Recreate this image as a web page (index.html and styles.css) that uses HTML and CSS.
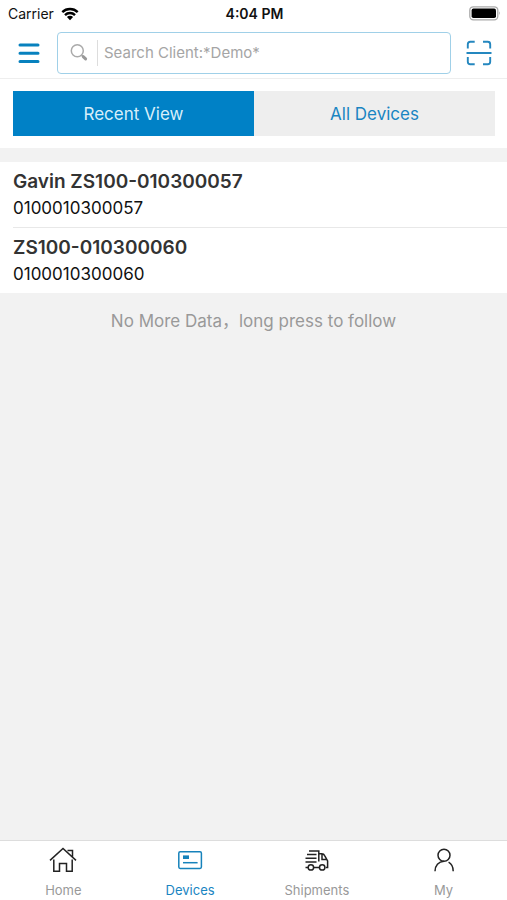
FILE: index.html
```html
<!DOCTYPE html>
<html lang="en">
<head>
<meta charset="utf-8">
<meta name="viewport" content="width=device-width, initial-scale=1">
<title>Devices</title>
<link rel="stylesheet" href="styles.css">
</head>
<body>
<div class="status">
  <div class="carrier">Carrier
    <svg width="18" height="14" viewBox="0 0 18 14" aria-hidden="true"><path d="M1.3 5.2a11 11 0 0 1 15.4 0M4 8.1a7.1 7.1 0 0 1 10 0" fill="none" stroke="#000" stroke-width="2.4"/><path d="M9 13.2 5.9 10.1a4.4 4.4 0 0 1 6.2 0z"/></svg>
  </div>
  <div class="time">4:04 PM</div>
  <svg class="battery" width="32" height="15" viewBox="0 0 32 15" aria-hidden="true"><rect x=".8" y=".8" width="28" height="13" rx="3.5" fill="#fff" stroke="#aaa" stroke-width="1.3"/><rect x="2.6" y="2.6" width="24.4" height="9.4" rx="1.8"/><path d="M30.2 5.3q1.6 2 0 4z" fill="#999"/></svg>
</div>
<header class="header">
  <button class="icon-button" type="button" aria-label="Menu">
    <svg width="22" height="22" viewBox="0 0 22 22"><path d="M2 2.9h18M2 11.3h18M2 19.6h18" fill="none" stroke="#0781be" stroke-width="3" stroke-linecap="round"/></svg>
  </button>
  <label class="search">
    <svg width="18" height="18" viewBox="0 0 18 18" aria-hidden="true"><circle cx="7.3" cy="6.8" r="6" fill="none" stroke="#aaa" stroke-width="1.5"/><path d="m11.6 11.3 1.8 1.5" stroke="#aaa" stroke-width="1.4"/><path d="m13.2 12.6 2.4 2.3" stroke="#999" stroke-width="3" stroke-linecap="round"/></svg>
    <input type="text" placeholder="Search Client:*Demo*" aria-label="Search Client">
  </label>
  <button class="icon-button" type="button" aria-label="Scan">
    <svg width="26" height="26" viewBox="0 0 26 26"><path d="M1.8 8.5V4.3q0-2.5 2.5-2.5h4.4M17 1.8h4.7q2.5 0 2.5 2.5v4.2M24.2 17v4.7q0 2.5-2.5 2.5H17M8.7 24.2H4.3q-2.5 0-2.5-2.5V17M.5 13h25" fill="none" stroke="#2487bf" stroke-width="1.9"/></svg>
  </button>
</header>
<nav class="tabs" aria-label="Device lists">
  <button class="tab tab-active" type="button">Recent View</button>
  <button class="tab" type="button">All Devices</button>
</nav>
<main class="main">
  <ul class="devices">
    <li class="device"><strong>Gavin ZS100-010300057</strong><span>0100010300057</span></li>
    <li class="device"><strong>ZS100-010300060</strong><span>0100010300060</span></li>
  </ul>
  <p class="end">No More Data，long press to follow</p>
</main>
<nav class="bar" aria-label="Main">
  <a class="item" href="#home">
    <svg width="28" height="26" viewBox="0 0 28 26"><path d="M1 13.4 14 1.5l13 11.9M18.5 3.6h5v6.6M4.8 12.5v11.7h5.7v-7.8h7v7.8h5.7V12.5" fill="none" stroke="#222" stroke-width="1.5"/></svg>
    Home</a>
  <a class="item item-active" href="#devices" aria-current="page">
    <svg width="28" height="26" viewBox="0 0 28 26"><rect x="2.8" y="4.8" width="22.6" height="16.6" rx="1.4" fill="none" stroke="#1682bb" stroke-width="1.5"/><path d="M7 8.4h6v3.6H7z" fill="#1682bb"/><path d="M7 15.7h14.6" stroke="#1682bb" stroke-width="1.5"/></svg>
    Devices</a>
  <a class="item" href="#shipments">
    <svg width="28" height="26" viewBox="0 0 28 26"><path d="M6 3.9h9.8v10.7M15.8 6.8h3q2 0 3 2l2.8 5.2v6.4h-1.8M19 6.8v5.6h5M4 7.6h9.5M2.5 11.2h11M2.5 15h11M2.5 20.4h2.6M10.7 20.4h5.6" fill="none" stroke="#222" stroke-width="1.5"/><circle cx="7.9" cy="20.4" r="2.7" fill="none" stroke="#222" stroke-width="1.5"/><circle cx="19.2" cy="20.4" r="2.7" fill="none" stroke="#222" stroke-width="1.5"/></svg>
    Shipments</a>
  <a class="item" href="#my">
    <svg width="28" height="26" viewBox="0 0 28 26"><circle cx="14" cy="8.2" r="6" fill="none" stroke="#222" stroke-width="1.5"/><path d="M5 24.2c0-5.4 3.5-9.6 9-10M18.6 15.2c3 1.7 4.6 5 4.6 9" fill="none" stroke="#222" stroke-width="1.5"/></svg>
    My</a>
</nav>
</body>
</html>
```
FILE: styles.css
```css
* {
  box-sizing: border-box;
}

body {
  margin: 0;
  min-height: 100vh;
  display: flex;
  flex-direction: column;
  background: #fff;
  color: #111;
  font-family: Inter, "Noto Sans CJK SC", sans-serif;
}

button {
  padding: 0;
  border: 0;
  background: none;
  font: inherit;
}

svg {
  display: block;
  flex: none;
}

.status {
  display: grid;
  grid-template-columns: 1fr auto 1fr;
  align-items: center;
  height: 27px;
  padding: 0 6px 0 8px;
  font-size: 14px;
}

.carrier {
  display: flex;
  align-items: center;
  gap: 7px;
}

.time {
  font-weight: 600;
}

.battery {
  justify-self: end;
}

.header {
  display: flex;
  align-items: center;
  height: 52px;
  padding-left: 1px;
  border-bottom: 1px solid #eee;
}

.icon-button {
  display: flex;
  justify-content: center;
  flex: 0 0 56px;
}

.search {
  flex: 1;
  min-width: 0;
  display: flex;
  align-items: center;
  gap: 9px;
  height: 42px;
  padding: 0 12px;
  border: 1px solid #a0d0e8;
  border-radius: 4px;
}

.search input {
  flex: 1;
  min-width: 0;
  height: 26px;
  padding: 0 0 0 6px;
  border: 0;
  border-left: 1px solid #ddd;
  outline: 0;
  background: none;
  font: inherit;
  font-size: 15px;
}

.search input::placeholder {
  color: #a5a5a5;
}

.tabs {
  display: flex;
  padding: 12px 12px 12px 13px;
}

.tab {
  flex: 1;
  height: 45px;
  background: #eee;
  color: #1985c2;
  font-size: 17px;
}

.tab-active {
  background: #0081c6;
  color: #d8effa;
}

.main {
  flex: 1;
  padding-top: 14px;
  background: #f2f2f2;
}

.devices {
  margin: 0;
  padding: 0 0 0 13px;
  list-style: none;
  background: #fff;
}

.device {
  display: flex;
  flex-direction: column;
  padding: 6px 0 5px;
  font-size: 17px;
  line-height: 27px;
}

.device + .device {
  border-top: 1px solid #e8e8e8;
}

.device strong {
  color: #333;
  font-size: 19px;
  font-weight: 600;
}

.end {
  margin: 16px 0;
  color: #999;
  font-size: 17px;
  line-height: 24px;
  text-align: center;
}

.bar {
  display: flex;
  height: 60px;
  border-top: 1px solid #ddd;
}

.item {
  flex: 1;
  display: flex;
  flex-direction: column;
  align-items: center;
  gap: 6px;
  padding-top: 6px;
  color: #999;
  font-size: 13px;
  line-height: 22px;
  text-decoration: none;
}

.item-active {
  color: #1985c2;
}
```
